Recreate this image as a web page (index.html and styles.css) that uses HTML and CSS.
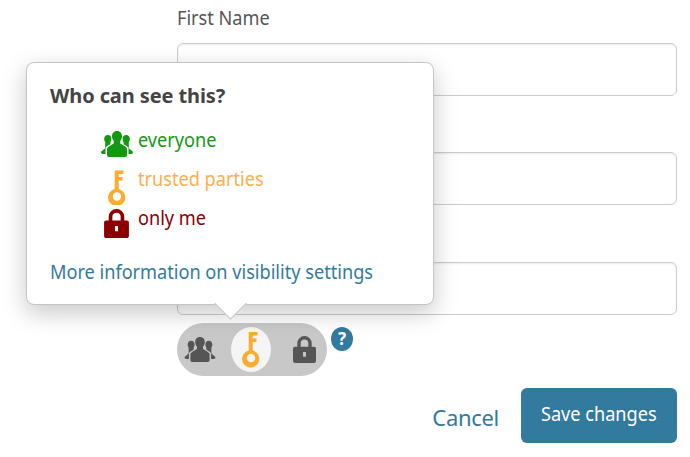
FILE: index.html
```html
<!DOCTYPE html>
<html lang="en">
<head>
  <meta charset="UTF-8">
  <title>Edit profile</title>
  <link rel="stylesheet" href="styles.css">
</head>
<body>
  <svg class="defs" width="0" height="0">
    <symbol id="i-people" viewBox="0 0 32 26">
      <path d="M16 0c3.200 0 5 2.300 5 5.300 0 2-.8 3.700-1.800 4.700v2.600l4.300 2.500c1.500.9 2.500 2 2.500 3.200V24c0 1.200-.8 2-2 2H8c-1.200 0-2-.8-2-2v-5.700c0-1.200 1-2.300 2.500-3.200l4.300-2.500V10c-1-1-1.800-2.700-1.800-4.700C11 2.300 12.800 0 16 0z"/>
      <path d="M6.800 4c2.100 0 3.600 1.600 3.600 3.800 0 1.400-.4 2.600-1 3.300v2.100l-2.400 1.400C5.200 15.500 4.500 16.600 4.500 18v5h-2C1.100 23 0 22.300 0 21.500c0-1 .8-1.800 1.800-2.300L4.200 17.200V11.100C3.600 10.400 3.200 9.200 3.200 7.800 3.200 5.600 4.700 4 6.800 4z"/>
      <path d="M25.200 4c-2.100 0-3.600 1.600-3.600 3.800 0 1.400.4 2.600 1 3.300v2.100l2.400 1.400c1.800.9 2.500 2 2.500 3.400v5h2c1.400 0 2.500-.7 2.500-1.500 0-1-.8-1.800-1.800-2.300l-2.400-2V11.100c.6-.7 1-1.900 1-3.300C28.800 5.600 27.300 4 25.200 4z"/>
    </symbol>
    <symbol id="i-key" viewBox="0 0 18 34">
      <path d="M6.700 0H15.500v3.600h-4.800v2.800h3.800V10h-3.800v8.600a8.600 8.600 0 1 1-4 0zM9 21.800a4.200 4.200 0 1 0 0 8.400 4.200 4.200 0 0 0 0-8.400z" fill-rule="evenodd"/>
    </symbol>
    <symbol id="i-lock" viewBox="0 0 24 28">
      <path d="M4.500 11V7.500a7.500 7.500 0 0 1 15 0V11H22c1.100 0 2 .9 2 2v13c0 1.100-.9 2-2 2H2c-1.100 0-2-.9-2-2V13c0-1.100.9-2 2-2zm3.500 0h8V7.500a4 4 0 0 0-8 0zM10.500 16.500v5h3v-5z" fill-rule="evenodd"/>
    </symbol>
  </svg>

  <form class="profile-form">
    <div class="field">
      <label class="field-label"><span class="narrow">First Name</span></label>
      <input class="field-input" type="text">
    </div>
    <div class="field">
      <label class="field-label covered">Last Name</label>
      <input class="field-input" type="text">
    </div>
    <div class="field">
      <label class="field-label covered">Published Name</label>
      <input class="field-input" type="text">
    </div>

    <div class="visibility">
      <div class="popover">
        <h3 class="popover-title">Who can see this?</h3>
        <ul class="legend">
          <li class="legend-item public">
            <span class="legend-icon"><svg class="icon-people"><use href="#i-people"/></svg></span>
            <span class="narrow">everyone</span>
          </li>
          <li class="legend-item limited">
            <span class="legend-icon"><svg class="icon-key"><use href="#i-key"/></svg></span>
            <span class="narrow">trusted parties</span>
          </li>
          <li class="legend-item private">
            <span class="legend-icon"><svg class="icon-lock"><use href="#i-lock"/></svg></span>
            <span class="narrow">only me</span>
          </li>
        </ul>
        <a class="popover-link narrow" href="#">More information on visibility settings</a>
      </div>
      <div class="toggle">
        <span class="toggle-opt first"><svg class="toggle-people"><use href="#i-people"/></svg></span>
        <span class="toggle-opt active"><svg class="toggle-key"><use href="#i-key"/></svg></span>
        <span class="toggle-opt last"><svg class="toggle-lock"><use href="#i-lock"/></svg></span>
      </div>
      <span class="help">?</span>
    </div>

    <div class="actions">
      <a class="cancel" href="#">Cancel</a>
      <button class="save" type="button"><span class="narrow center">Save changes</span></button>
    </div>
  </form>
</body>
</html>
```

FILE: styles.css
```css
* {
  box-sizing: border-box;
}

body {
  margin: 0;
  height: 457px;
  overflow: hidden;
  background: #fff;
  font-family: "Noto Sans", "Open Sans", sans-serif;
  color: #555;
}

.defs {
  position: absolute;
}

/* the reference text runs narrower than Noto Sans */
.narrow {
  display: inline-block;
  white-space: nowrap;
  transform: scaleX(0.907);
  transform-origin: left center;
}

.narrow.center {
  transform-origin: center;
}

.profile-form {
  width: 500px;
  margin-left: 177px;
  padding-top: 5px;
}

.field {
  margin-bottom: 18.25px;
}

.field-label {
  display: block;
  height: 38px;
  line-height: 26px;
  font-size: 20px;
  color: #555;
}

.field-label.covered {
  visibility: hidden;
}

.field-input {
  display: block;
  width: 100%;
  height: 53px;
  border: 1px solid #ccc;
  border-radius: 6px;
  background: #fff;
  box-shadow: inset 0 1px 2px rgba(0, 0, 0, 0.08);
}

.visibility {
  position: relative;
  display: flex;
  align-items: flex-start;
  gap: 4px;
  margin-top: -10px;
}

.toggle {
  display: flex;
  align-items: center;
  width: 150px;
  height: 53px;
  border-radius: 27px;
  background: #c8c8c8;
}

.toggle-opt {
  display: flex;
  align-items: center;
  height: 45px;
  fill: #555;
}

.toggle-opt.first {
  width: 54px;
  padding-left: 7px;
}

.toggle-opt.last {
  padding-left: 22px;
}

.toggle-opt.active {
  justify-content: center;
  width: 40px;
  border-radius: 50%;
  background: #f5f5f5;
  fill: #fbab2e;
}

.toggle-people {
  width: 32px;
  height: 25px;
}

.toggle-key {
  width: 18px;
  height: 38px;
}

.toggle-lock {
  width: 23px;
  height: 27px;
}

.help {
  width: 22px;
  height: 24px;
  margin-top: 4px;
  border-radius: 50%;
  background: #337a9f;
  color: #fff;
  font-size: 17px;
  font-weight: 700;
  line-height: 24px;
  text-align: center;
}

.popover {
  position: absolute;
  left: -151px;
  bottom: 71px;
  width: 408px;
  height: 243px;
  padding: 20px 23px;
  border: 1px solid #c4c4c4;
  border-radius: 8px;
  background: #fff;
  box-shadow: 0 8px 24px rgba(0, 0, 0, 0.22);
}

.popover::after {
  content: "";
  position: absolute;
  left: 192px;
  bottom: -11px;
  width: 22px;
  height: 22px;
  background: #fff;
  border-right: 1px solid #c4c4c4;
  border-bottom: 1px solid #c4c4c4;
  transform: rotate(45deg);
}

.popover-title {
  margin: 0 0 18px;
  font-size: 20px;
  line-height: 26px;
  font-weight: 700;
  letter-spacing: -0.1px;
  color: #444;
}

.legend {
  margin: 0 0 15px;
  padding: 0 0 0 50px;
  list-style: none;
}

.legend-item {
  display: flex;
  height: 39px;
  gap: 5px;
  font-size: 20px;
  line-height: 26px;
}

.legend-icon {
  display: flex;
  justify-content: center;
  width: 33px;
  padding-top: 4px;
}

.public {
  color: #119911;
  fill: #119911;
}

.limited {
  color: #ffad4d;
  fill: #fbab2e;
}

.private {
  color: #8b0000;
  fill: #8b0000;
}

.icon-people {
  width: 32px;
  height: 26px;
}

.icon-key {
  width: 18px;
  height: 35px;
}

.icon-lock {
  width: 25px;
  height: 29px;
}

.popover-link {
  font-size: 20px;
  line-height: 26px;
  color: #337a9f;
  text-decoration: none;
}

.actions {
  display: flex;
  justify-content: flex-end;
  align-items: center;
  gap: 22px;
  margin-top: 12px;
}

.cancel {
  margin-top: 4px;
  font-size: 22px;
  letter-spacing: -0.3px;
  color: #337a9f;
  text-decoration: none;
}

.save {
  width: 156px;
  height: 55px;
  padding: 0 0 4px;
  border: 0;
  border-radius: 6px;
  background: #337a9f;
  color: #fff;
  font-family: inherit;
  font-size: 20px;
}
```
